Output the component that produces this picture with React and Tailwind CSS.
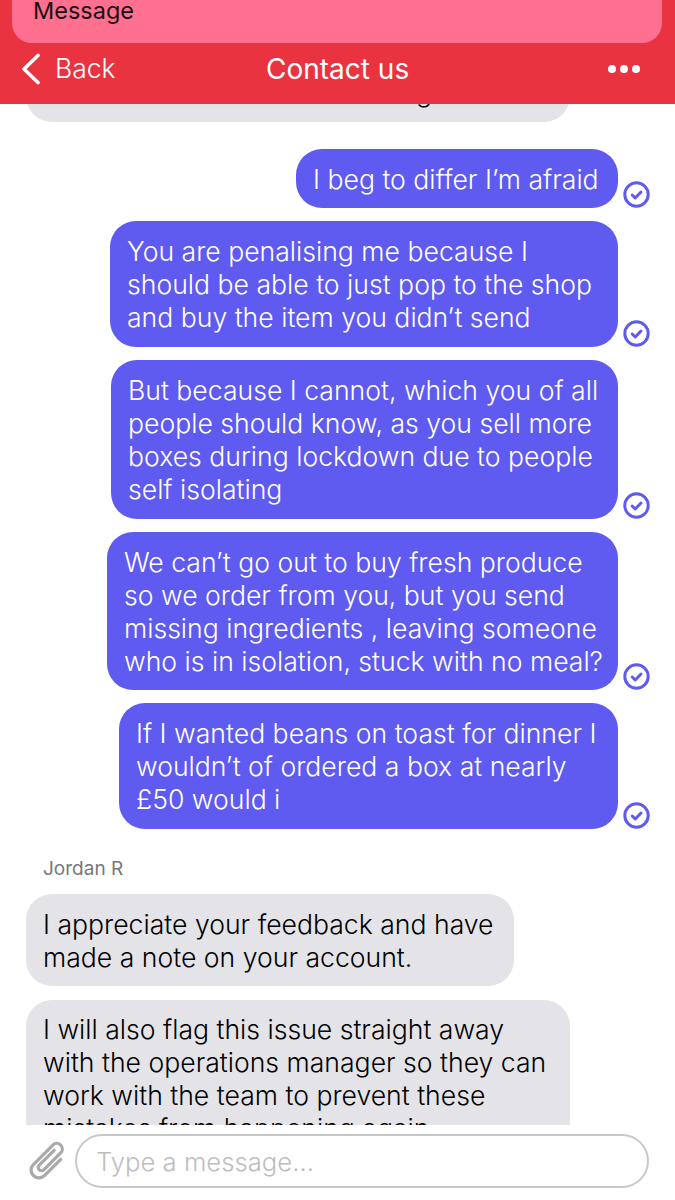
import React from 'react'

const font = "font-['Inter','Liberation_Sans',sans-serif]"

function Tick() {
  return (
    <svg width="27" height="27" viewBox="0 0 27 27" className="shrink-0">
      <circle cx="13.5" cy="13.5" r="11.7" fill="none" stroke="#5f5bf0" strokeWidth="3" />
      <path d="M9.2 14l3 3 5.800-6" fill="none" stroke="#5f5bf0" strokeWidth="3" strokeLinecap="round" strokeLinejoin="round" />
    </svg>
  )
}

function Sent({ size, lines }) {
  return (
    <div className="flex items-end justify-end gap-[5px] pr-[25px]">
      <div className={`${size} rounded-[26px] bg-[#5f5bf0] px-[17px] pt-[14px] text-white whitespace-nowrap`}>
        {lines.map((l) => (
          <div key={l}>{l}</div>
        ))}
      </div>
      <Tick />
    </div>
  )
}

export default function App() {
  return (
    <div className={`${font} flex h-[1200px] w-[675px] flex-col overflow-hidden bg-white text-[26.6px] leading-[33px] font-[350]`}>
      {/* Header */}
      <div className="h-[104px] shrink-0 bg-[#ea3340]">
        <div className="mr-[13px] ml-[12px] flex h-[43px] items-end rounded-b-[20px] bg-[#ff6f8f] px-[21px] pb-[20px] text-[23.5px] leading-[24px] font-normal text-[#1c0f14]">
          Message
        </div>
        <div className="relative flex h-[61px] items-center justify-between pr-[35px] pl-[20px] text-white">
          <div className="flex items-center gap-[14px] pb-[10px]">
            <svg width="21" height="32" viewBox="0 0 21 32">
              <path d="M18 2.500L4 16l14 13.500" fill="none" stroke="#fff" strokeWidth="3.600" strokeLinecap="round" strokeLinejoin="round" />
            </svg>
            <span className="text-[26.5px] font-[350]">Back</span>
          </div>
          <span className="absolute top-[10px] left-[266px] text-[28px] leading-[33px] font-normal">Contact us</span>
          <div className="flex gap-[4px] pb-[10px]">
            <span className="size-[8px] rounded-full bg-white" />
            <span className="size-[8px] rounded-full bg-white" />
            <span className="size-[8px] rounded-full bg-white" />
          </div>
        </div>
      </div>

      {/* Messages */}
      <div className="flex min-h-0 flex-1 flex-col overflow-hidden">
        <div className="mt-[-40px] ml-[26px] flex h-[58px] w-[544px] shrink-0 items-end rounded-b-[26px] bg-[#e4e4e8] pb-[13px] pl-[390px] text-black">
          g
        </div>
        <div className="mt-[27px] flex flex-col gap-[13px]">
          <Sent size="w-[322px] h-[59px]" lines={["I beg to differ I’m afraid"]} />
          <Sent size="w-[508px] h-[126px]" lines={["You are penalising me because I", "should be able to just pop to the shop", "and buy the item you didn’t send"]} />
          <Sent size="w-[507px] h-[159px]" lines={["But because I cannot, which you of all", "people should know, as you sell more", "boxes during lockdown due to people", "self isolating"]} />
          <Sent size="w-[511px] h-[158px]" lines={["We can’t go out to buy fresh produce", "so we order from you, but you send", "missing ingredients , leaving someone", "who is in isolation, stuck with no meal?"]} />
          <Sent size="w-[499px] h-[126px]" lines={["If I wanted beans on toast for dinner I", "wouldn’t of ordered a box at nearly", "£50 would i"]} />
        </div>
        <div className="mt-[29px] pl-[43px] text-[19px] leading-[22px] font-normal text-[#77777c]">Jordan R</div>
        <div className="mt-[14px] ml-[26px] h-[92px] w-[488px] shrink-0 rounded-[26px] bg-[#e4e4e8] px-[17px] pt-[14px] whitespace-nowrap text-black">
          <div>I appreciate your feedback and have</div>
          <div>made a note on your account.</div>
        </div>
        <div className="mt-[14px] ml-[26px] w-[544px] shrink-0 rounded-[26px] bg-[#e4e4e8] px-[17px] pt-[13px] pb-[13px] whitespace-nowrap text-black">
          <div>I will also flag this issue straight away</div>
          <div>with the operations manager so they can</div>
          <div>work with the team to prevent these</div>
          <div>mistakes from happening again</div>
        </div>
      </div>

      {/* Input */}
      <div className="flex h-[75px] shrink-0 items-start gap-[4px] pt-[9px] pr-[26px] pl-[25px]">
        <svg width="46" height="48" viewBox="-7 -7 50 52" className="mt-[3px] shrink-0">
          <g transform="rotate(45 18 19)">
            <path d="M14.500 6V29a3.500 3.500 0 0 0 7 0V3a6 6 0 0 0-12 0V33a8.500 8.500 0 0 0 17 0V8" fill="none" stroke="#a9a9a9" strokeWidth="3.500" strokeLinecap="round" />
          </g>
        </svg>
        <div className="flex h-[54px] flex-1 items-center rounded-[27px] border-2 border-[#c8c8c8] px-[19px] text-[25.7px] font-light text-[#bdbdc0]">
          Type a message...
        </div>
      </div>
    </div>
  )
}
